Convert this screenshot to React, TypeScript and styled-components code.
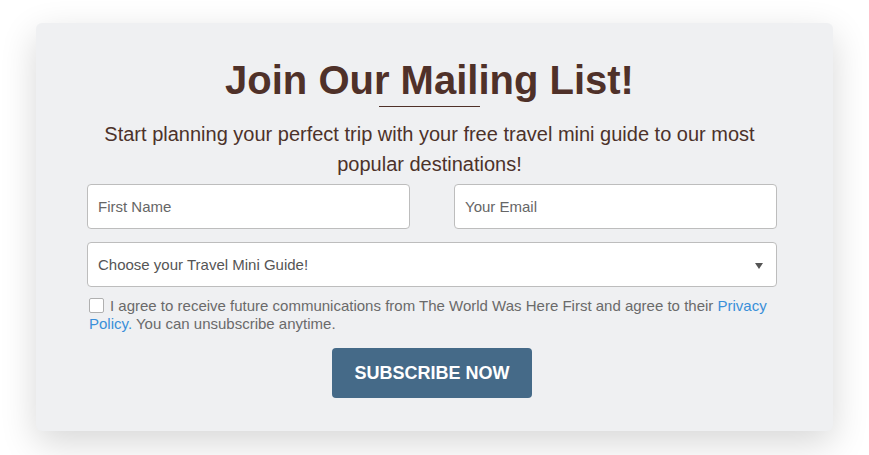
import React from "react";
import styled, { createGlobalStyle } from "styled-components";

const GlobalStyle = createGlobalStyle`
  html, body {
    margin: 0;
    padding: 0;
    background: #fff;
    font-family: "Liberation Sans", Arial, sans-serif;
  }
  * {
    box-sizing: border-box;
  }
`;

const App = () => {
  return (
    <>
      <GlobalStyle />
      <Page>
        <Card>
          <Header>
            <Title>Join Our Mailing List!</Title>
            <Rule />
            <Subtitle>
              Start planning your perfect trip with your free travel mini guide
              to our most popular destinations!
            </Subtitle>
          </Header>
          <Form onSubmit={(e) => e.preventDefault()}>
            <Row>
              <Field type="text" placeholder="First Name" />
              <Field type="email" placeholder="Your Email" />
            </Row>
            <SelectWrap>
              <Select defaultValue="">
                <option value="" disabled>
                  Choose your Travel Mini Guide!
                </option>
              </Select>
              <Arrow width="8" height="6" viewBox="0 0 8 6">
                <path d="M0 0 H8 L4 6 Z" fill="#555" />
              </Arrow>
            </SelectWrap>
            <Consent>
              <Check />I agree to receive future communications from The World
              Was Here First and agree to their{" "}
              <Link href="#">Privacy Policy.</Link> You can unsubscribe anytime.
            </Consent>
            <ButtonRow>
              <Button type="submit">Subscribe Now</Button>
            </ButtonRow>
          </Form>
        </Card>
      </Page>
    </>
  );
};

export default App;

const Page = styled.div`
  padding: 23px 36px 30px;
`;

const Card = styled.div`
  background: #eff0f2;
  border-radius: 6px;
  box-shadow: 0 12px 36px rgba(0, 0, 0, 0.16);
  padding: 33px 56px 33px 51px;
  display: flex;
  flex-direction: column;
  align-items: center;
`;

const Header = styled.div`
  width: 690px;
  padding-right: 5px;
  display: flex;
  flex-direction: column;
  align-items: center;
`;

const Title = styled.h2`
  margin: 0;
  font-size: 40px;
  line-height: 48px;
  font-weight: 700;
  color: #4f3129;
  text-align: center;
`;

const Rule = styled.div`
  width: 101px;
  height: 1px;
  background: #4f3129;
  margin: 2px 0 12px;
`;

const Subtitle = styled.p`
  margin: 0 0 5px;
  width: 100%;
  font-size: 20px;
  line-height: 30px;
  color: #4c322a;
  text-align: center;
`;

const Form = styled.form`
  width: 690px;
  display: flex;
  flex-direction: column;
`;

const Row = styled.div`
  display: grid;
  grid-template-columns: 1fr 1fr;
  column-gap: 44px;
  margin-bottom: 13px;
`;

const Field = styled.input`
  height: 45px;
  width: 100%;
  border: 1px solid #bdbdbd;
  border-radius: 4px;
  background: #fff;
  padding: 0 10px;
  font-family: "Liberation Sans", Arial, sans-serif;
  font-size: 15px;
  color: #555;
  outline: none;
  &::placeholder {
    color: #666;
  }
`;

const SelectWrap = styled.div`
  position: relative;
  margin-bottom: 10px;
`;

const Select = styled.select`
  appearance: none;
  width: 100%;
  height: 45px;
  border: 1px solid #bdbdbd;
  border-radius: 4px;
  background: #fff;
  padding: 0 10px;
  font-family: "Liberation Sans", Arial, sans-serif;
  font-size: 15px;
  color: #555;
  outline: none;
`;

const Arrow = styled.svg`
  position: absolute;
  right: 14px;
  top: 21px;
  pointer-events: none;
`;

const Consent = styled.p`
  margin: 0;
  padding-left: 2px;
  font-size: 15px;
  line-height: 17.5px;
  color: #6a6a6a;
`;

const Check = styled.span`
  display: inline-block;
  width: 15px;
  height: 15px;
  border: 1px solid #b0b0b0;
  border-radius: 2px;
  background: #fff;
  vertical-align: -2px;
  margin-right: 6px;
`;

const Link = styled.a`
  color: #3a8fd9;
  text-decoration: none;
`;

const ButtonRow = styled.div`
  display: flex;
  justify-content: center;
  margin-top: 16px;
`;

const Button = styled.button`
  width: 200px;
  height: 50px;
  border: none;
  border-radius: 4px;
  background: #456a88;
  color: #fff;
  font-family: "Liberation Sans", Arial, sans-serif;
  font-size: 18px;
  font-weight: 700;
  text-transform: uppercase;
  cursor: pointer;
`;
